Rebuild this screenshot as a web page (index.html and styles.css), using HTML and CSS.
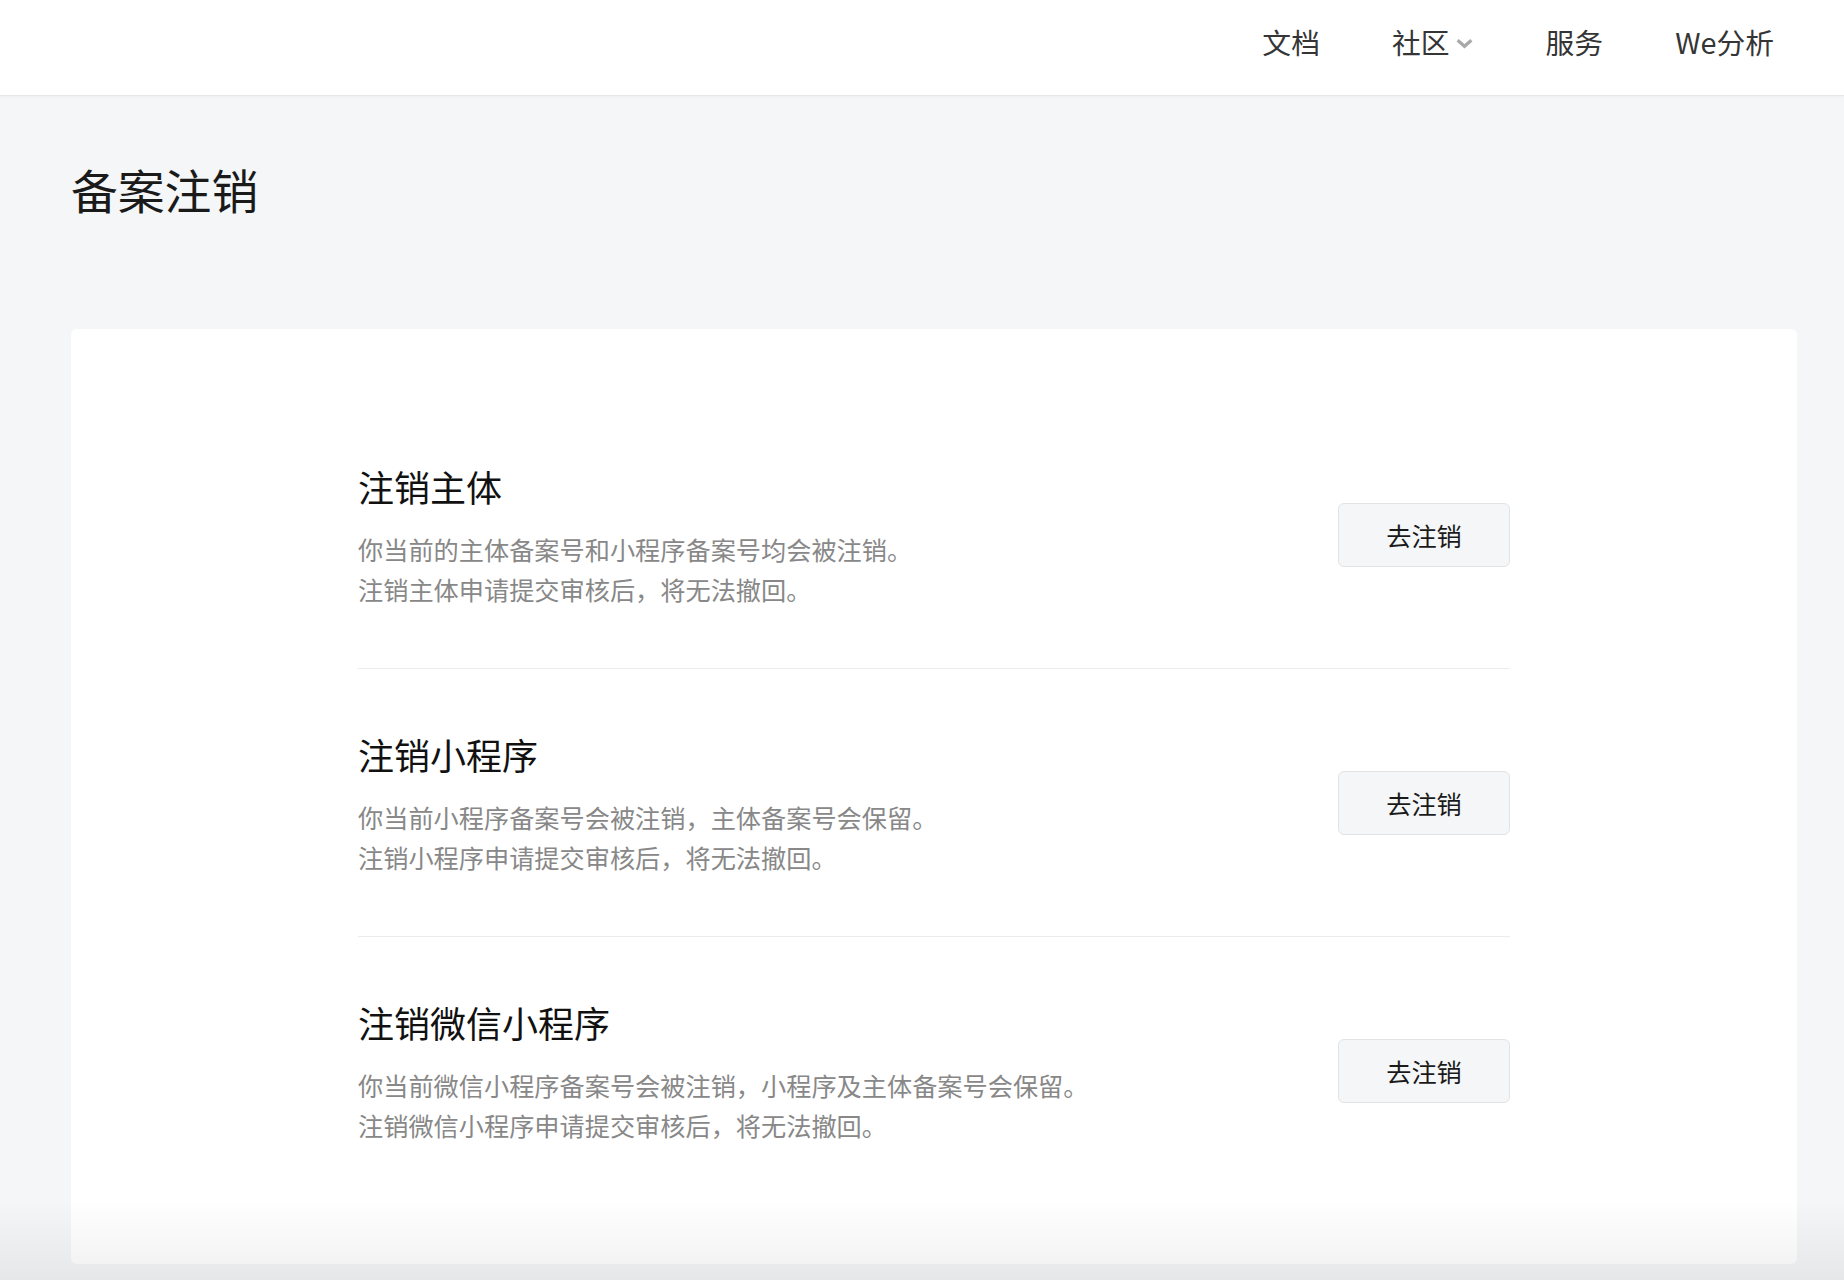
FILE: index.html
```html
<!DOCTYPE html>
<html lang="zh-CN">

<head>
    <meta charset="UTF-8">
    <meta name="viewport" content="width=device-width, initial-scale=1.0">
    <title>备案注销</title>
    <link rel="stylesheet" href="styles.css">
</head>

<body>
    <header class="topbar">
        <nav class="nav">
            <a class="nav-item" href="#">文档</a>
            <a class="nav-item" href="#">社区
                <svg class="nav-arrow" viewBox="0 0 20 12" aria-hidden="true">
                    <polyline points="2.5,2.5 10,9 17.5,2.5" />
                </svg>
            </a>
            <a class="nav-item" href="#">服务</a>
            <a class="nav-item" href="#">We分析</a>
        </nav>
    </header>

    <main class="page">
        <h1 class="page-title">备案注销</h1>

        <div class="card">
            <div class="cancel-list">
                <div class="cancel-item">
                    <div class="cancel-info">
                        <h2 class="cancel-title">注销主体</h2>
                        <p class="cancel-desc">你当前的主体备案号和小程序备案号均会被注销。<br>注销主体申请提交审核后，将无法撤回。</p>
                    </div>
                    <button class="cancel-btn" type="button">去注销</button>
                </div>

                <div class="cancel-item">
                    <div class="cancel-info">
                        <h2 class="cancel-title">注销小程序</h2>
                        <p class="cancel-desc">你当前小程序备案号会被注销，主体备案号会保留。<br>注销小程序申请提交审核后，将无法撤回。</p>
                    </div>
                    <button class="cancel-btn" type="button">去注销</button>
                </div>

                <div class="cancel-item">
                    <div class="cancel-info">
                        <h2 class="cancel-title">注销微信小程序</h2>
                        <p class="cancel-desc">你当前微信小程序备案号会被注销，小程序及主体备案号会保留。<br>注销微信小程序申请提交审核后，将无法撤回。</p>
                    </div>
                    <button class="cancel-btn" type="button">去注销</button>
                </div>
            </div>
        </div>
    </main>

    <div class="bottom-fade"></div>
</body>

</html>
```

FILE: styles.css
```css
body {
    margin: 0;
    background-color: #f5f6f8;
    font-family: "Noto Sans CJK SC", sans-serif;
    color: #1a1a1a;
}

.topbar {
    height: 96px;
    box-sizing: border-box;
    display: flex;
    justify-content: flex-end;
    align-items: center;
    padding: 0 70px 12px 0;
    background-color: #fff;
    border-bottom: 1px solid #e6e7e9;
    box-shadow: 0 1px 3px rgba(0, 0, 0, 0.04);
}

.nav {
    display: flex;
    gap: 72px;
}

.nav-item {
    display: flex;
    align-items: center;
    font-size: 28.8px;
    line-height: 40px;
    color: #353535;
    text-decoration: none;
}

.nav-arrow {
    width: 19px;
    height: 11px;
    margin-left: 5px;
    margin-top: 4px;
}

.nav-arrow polyline {
    fill: none;
    stroke: #a9a9a9;
    stroke-width: 3.6;
}

.page {
    padding: 0 47px 16px 71px;
}

.page-title {
    margin: 60px 0 108px;
    font-size: 46.8px;
    font-weight: normal;
    line-height: 65px;
    color: #1a1a1a;
}

.card {
    background-color: #fff;
    border-radius: 6px;
    padding: 72px 0 60px;
}

.cancel-list {
    width: 1152px;
    margin: 0 auto;
}

.cancel-item {
    display: flex;
    justify-content: space-between;
    align-items: center;
    padding: 60px 0 59px;
    border-bottom: 1px solid #ececec;
}

.cancel-item:last-child {
    border-bottom: none;
}

.cancel-title {
    margin: 0;
    font-size: 36px;
    font-weight: normal;
    line-height: 50px;
    color: #111;
}

.cancel-desc {
    margin: 18px 0 0;
    font-size: 25.2px;
    line-height: 40px;
    color: #888;
}

.cancel-btn {
    width: 172px;
    height: 64px;
    background-color: #f5f6f7;
    border: 1px solid #e2e3e5;
    border-radius: 6px;
    font-family: inherit;
    font-size: 25.2px;
    color: #1a1a1a;
    cursor: pointer;
}

.bottom-fade {
    position: fixed;
    left: 0;
    right: 0;
    bottom: 0;
    height: 80px;
    background: linear-gradient(rgba(0, 0, 0, 0), rgba(0, 0, 0, 0.06));
    pointer-events: none;
}
```
